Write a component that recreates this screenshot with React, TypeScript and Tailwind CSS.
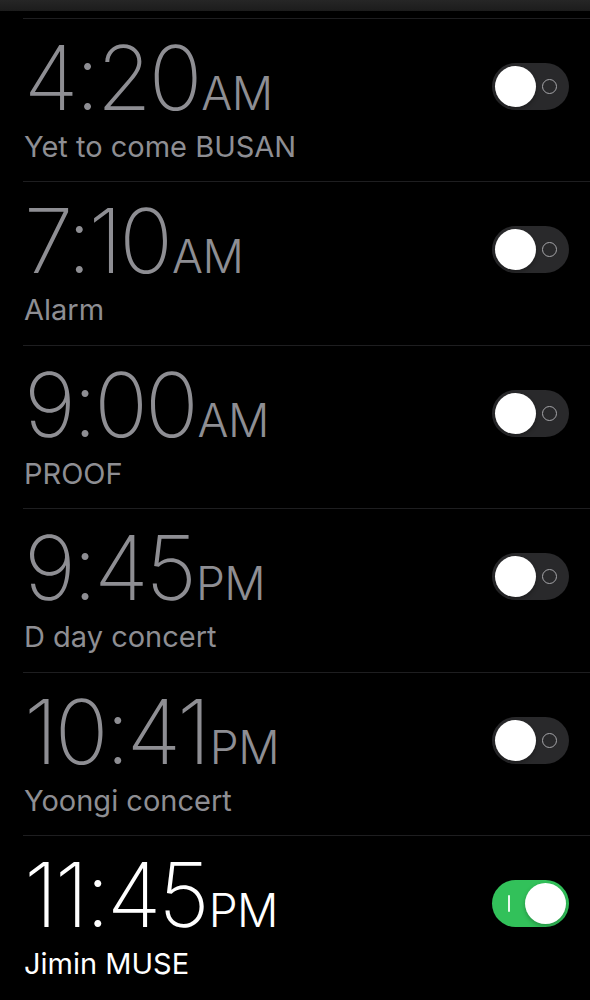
const alarms = [
  { time: '4:20', period: 'AM', label: 'Yet to come BUSAN', on: false },
  { time: '7:10', period: 'AM', label: 'Alarm', on: false },
  { time: '9:00', period: 'AM', label: 'PROOF', on: false },
  { time: '9:45', period: 'PM', label: 'D day concert', on: false },
  { time: '10:41', period: 'PM', label: 'Yoongi concert', on: false },
  { time: '11:45', period: 'PM', label: 'Jimin MUSE', on: true },
];

function Toggle({ on }: { on: boolean }) {
  if (on) {
    return (
      <div className="flex items-center w-[77px] h-[47px] rounded-full bg-[#32c15a] p-[3px] pl-[16px] shrink-0">
        <div className="w-[2px] h-[17px] bg-white/90 rounded-full" />
        <div className="ml-auto w-[41px] h-[41px] rounded-full bg-white shadow-[0_2px_4px_rgba(0,0,0,0.25)]" />
      </div>
    );
  }
  return (
    <div className="flex items-center w-[77px] h-[47px] rounded-full bg-[#29292b] p-[3px] shrink-0">
      <div className="w-[41px] h-[41px] rounded-full bg-white shadow-[0_2px_4px_rgba(0,0,0,0.3)]" />
      <div className="ml-[6px] w-[15px] h-[15px] rounded-full border-[1.5px] border-[#a5a5a9]" />
    </div>
  );
}

export default function App() {
  return (
    <div className="min-h-screen w-[590px] bg-black overflow-hidden" style={{ fontFamily: 'Inter, "Noto Sans", sans-serif' }}>
      <div className="h-[11px] bg-gradient-to-b from-[#262626] to-[#1c1c1c]" />
      <div className="pt-[7px]">
        {alarms.map((a) => (
          <div key={a.time + a.period} className="ml-[23px] h-[163.4px] border-t-[1.5px] border-[#1e1e20] flex items-start justify-between pr-[21px]">
            <div className={a.on ? 'text-white' : 'text-[#8e8e93]'}>
              <div className="flex items-baseline pt-[14px] pl-[1px] leading-none">
                <span className="text-[89px] font-extralight tracking-[-0.035em]">{a.time}</span>
                <span className="text-[46px] font-light tracking-[-0.01em] ml-[2px]">{a.period}</span>
              </div>
              <div className="text-[29px] leading-none mt-[10px] pl-[1px] font-normal">{a.label}</div>
            </div>
            <div className="mt-[44px]">
              <Toggle on={a.on} />
            </div>
          </div>
        ))}
      </div>
    </div>
  );
}
